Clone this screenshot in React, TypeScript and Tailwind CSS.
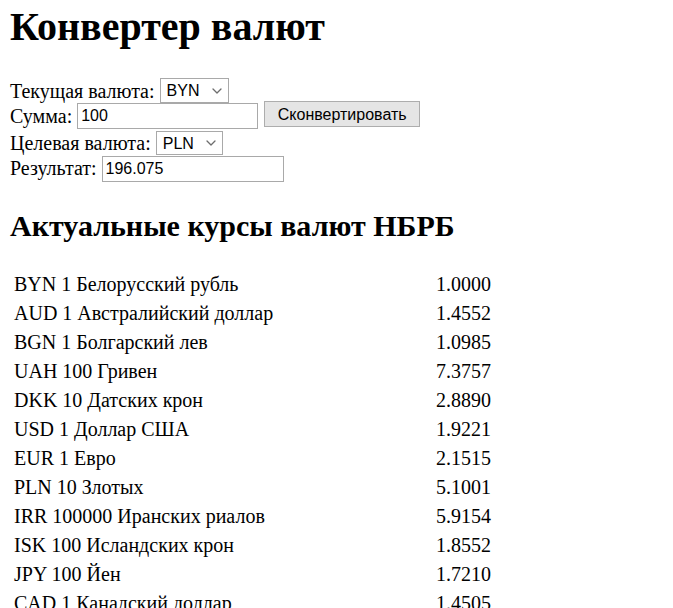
import React from "react";

const RATES = [
  { code: "BYN", scale: 1, name: "Белорусский рубль", rate: "1.0000" },
  { code: "AUD", scale: 1, name: "Австралийский доллар", rate: "1.4552" },
  { code: "BGN", scale: 1, name: "Болгарский лев", rate: "1.0985" },
  { code: "UAH", scale: 100, name: "Гривен", rate: "7.3757" },
  { code: "DKK", scale: 10, name: "Датских крон", rate: "2.8890" },
  { code: "USD", scale: 1, name: "Доллар США", rate: "1.9221" },
  { code: "EUR", scale: 1, name: "Евро", rate: "2.1515" },
  { code: "PLN", scale: 10, name: "Злотых", rate: "5.1001" },
  { code: "IRR", scale: 100000, name: "Иранских риалов", rate: "5.9154" },
  { code: "ISK", scale: 100, name: "Исландских крон", rate: "1.8552" },
  { code: "JPY", scale: 100, name: "Йен", rate: "1.7210" },
  { code: "CAD", scale: 1, name: "Канадский доллар", rate: "1.4505" },
];

const CODES = RATES.map((r) => r.code);

function Chevron() {
  return (
    <svg
      className="pointer-events-none absolute right-[7px] top-1/2 -translate-y-1/2"
      width="10"
      height="6"
      viewBox="0 0 10 6"
      fill="none"
    >
      <path d="M1 1l4 4 4-4" stroke="#6d6d6d" strokeWidth="1.3" strokeLinecap="round" strokeLinejoin="round" />
    </svg>
  );
}

function CurrencySelect({ value, className }: { value: string; className: string }) {
  return (
    <div className={`relative ${className}`}>
      <select
        defaultValue={value}
        className="h-full w-full appearance-none rounded-none border border-[#a9a9a9] bg-white pl-[6px] text-[16px] text-black outline-none font-['Liberation_Sans',Arial,sans-serif]"
      >
        {CODES.map((c) => (
          <option key={c} value={c}>
            {c}
          </option>
        ))}
      </select>
      <Chevron />
    </div>
  );
}

export default function App() {
  return (
    <div className="h-[608px] overflow-hidden bg-white pl-[10px] pt-[4px] text-black font-['Liberation_Serif','Times_New_Roman',serif]">
      <h1 className="text-[40px] font-bold leading-[46px]">Конвертер валют</h1>

      {/* form */}
      <div className="mt-[27px] text-[20px] leading-[23px]">
        <div className="flex h-[26px] items-start gap-[5px]">
          <span className="mt-[2.5px]">Текущая валюта:</span>
          <CurrencySelect value="BYN" className="mt-[1px] h-[25px] w-[69px]" />
        </div>
        <div className="flex h-[27px] items-start">
          <span className="mt-[2px]">Сумма:</span>
          <input
            defaultValue="100"
            className="ml-[5px] h-[26px] w-[181px] rounded-none border border-[#a9a9a9] px-[3px] text-[16px] outline-none font-['Liberation_Sans',Arial,sans-serif]"
          />
          <button className="ml-[6px] mt-[-2px] h-[26px] w-[156px] border border-[#adadad] bg-[#e5e5e5] text-[16px] font-['Liberation_Sans',Arial,sans-serif]">
            Сконвертировать
          </button>
        </div>
        <div className="flex h-[26px] items-start gap-[5px]">
          <span className="mt-[1.5px]">Целевая валюта:</span>
          <CurrencySelect value="PLN" className="mt-[1px] h-[24px] w-[67px]" />
        </div>
        <div className="flex h-[27px] items-start gap-[5px]">
          <span className="mt-[1px]">Результат:</span>
          <input
            defaultValue="196.075"
            className="h-[26px] w-[182px] rounded-none border border-[#a9a9a9] px-[3px] text-[16px] outline-none font-['Liberation_Sans',Arial,sans-serif]"
          />
        </div>
      </div>

      <h2 className="mt-[25px] text-[30px] font-bold leading-[35px]">Актуальные курсы валют НБРБ</h2>

      {/* rates table */}
      <div className="mt-[27px] text-[20px] leading-[23px]">
        {RATES.map((r) => (
          <div key={r.code} className="flex h-[29px] items-center">
            <div className="w-[426px] pl-[4px]">
              {r.code} {r.scale} {r.name}
            </div>
            <div>{r.rate}</div>
          </div>
        ))}
      </div>
    </div>
  );
}
